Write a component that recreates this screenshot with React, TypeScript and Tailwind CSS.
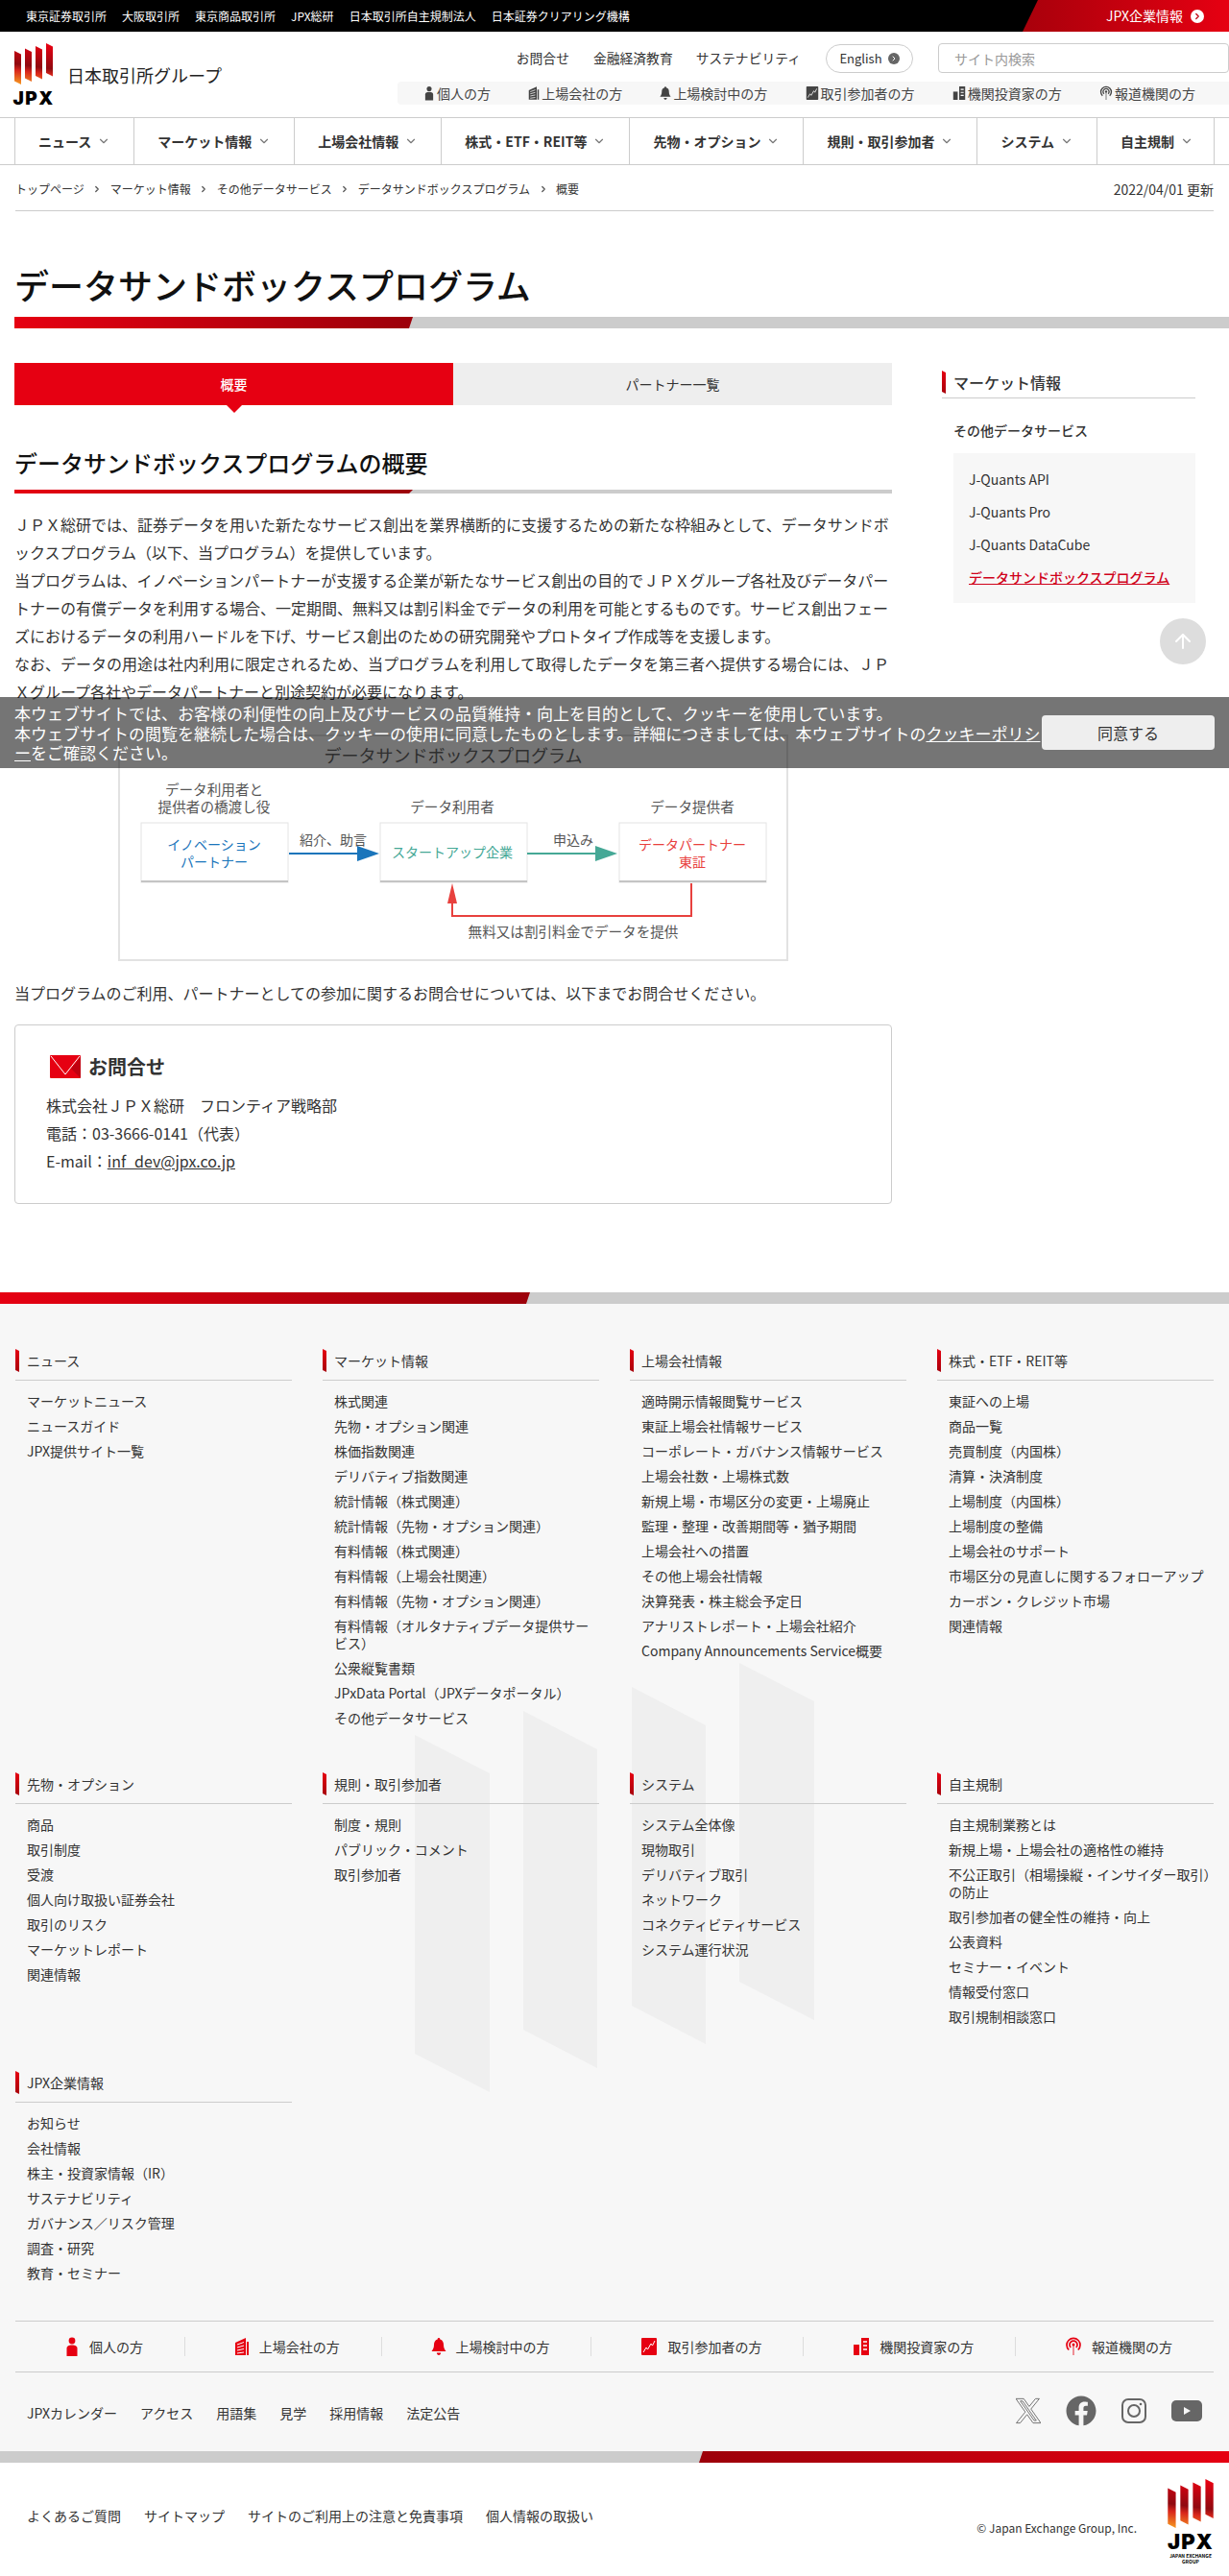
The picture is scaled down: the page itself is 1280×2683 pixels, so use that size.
import { ChevronDown, ChevronRight, ArrowUp } from "lucide-react";
import { FaFacebook } from "react-icons/fa";

type IconKind = "person" | "building" | "bell" | "chart" | "bank" | "antenna";

const topLinks = ["東京証券取引所", "大阪取引所", "東京商品取引所", "JPX総研", "日本取引所自主規制法人", "日本証券クリアリング機構"];
const navItems = ["ニュース", "マーケット情報", "上場会社情報", "株式・ETF・REIT等", "先物・オプション", "規則・取引参加者", "システム", "自主規制"];
const crumbs = ["トップページ", "マーケット情報", "その他データサービス", "データサンドボックスプログラム"];

const audiences: { kind: IconKind; label: string }[] = [
    { kind: "person", label: "個人の方" },
    { kind: "building", label: "上場会社の方" },
    { kind: "bell", label: "上場検討中の方" },
    { kind: "chart", label: "取引参加者の方" },
    { kind: "bank", label: "機関投資家の方" },
    { kind: "antenna", label: "報道機関の方" },
];

const footerSections = [
    { title: "ニュース", links: ["マーケットニュース", "ニュースガイド", "JPX提供サイト一覧"] },
    {
        title: "マーケット情報",
        links: ["株式関連", "先物・オプション関連", "株価指数関連", "デリバティブ指数関連", "統計情報（株式関連）", "統計情報（先物・オプション関連）", "有料情報（株式関連）", "有料情報（上場会社関連）", "有料情報（先物・オプション関連）", "有料情報（オルタナティブデータ提供サービス）", "公衆縦覧書類", "JPxData Portal（JPXデータポータル）", "その他データサービス"],
    },
    {
        title: "上場会社情報",
        links: ["適時開示情報閲覧サービス", "東証上場会社情報サービス", "コーポレート・ガバナンス情報サービス", "上場会社数・上場株式数", "新規上場・市場区分の変更・上場廃止", "監理・整理・改善期間等・猶予期間", "上場会社への措置", "その他上場会社情報", "決算発表・株主総会予定日", "アナリストレポート・上場会社紹介", "Company Announcements Service概要"],
    },
    {
        title: "株式・ETF・REIT等",
        links: ["東証への上場", "商品一覧", "売買制度（内国株）", "清算・決済制度", "上場制度（内国株）", "上場制度の整備", "上場会社のサポート", "市場区分の見直しに関するフォローアップ", "カーボン・クレジット市場", "関連情報"],
    },
    { title: "先物・オプション", links: ["商品", "取引制度", "受渡", "個人向け取扱い証券会社", "取引のリスク", "マーケットレポート", "関連情報"] },
    { title: "規則・取引参加者", links: ["制度・規則", "パブリック・コメント", "取引参加者"] },
    { title: "システム", links: ["システム全体像", "現物取引", "デリバティブ取引", "ネットワーク", "コネクティビティサービス", "システム運行状況"] },
    {
        title: "自主規制",
        links: ["自主規制業務とは", "新規上場・上場会社の適格性の維持", "不公正取引（相場操縦・インサイダー取引）の防止", "取引参加者の健全性の維持・向上", "公表資料", "セミナー・イベント", "情報受付窓口", "取引規制相談窓口"],
    },
    { title: "JPX企業情報", links: ["お知らせ", "会社情報", "株主・投資家情報（IR）", "サステナビリティ", "ガバナンス／リスク管理", "調査・研究", "教育・セミナー"] },
];

const AudienceIcon = ({ kind, color, size = 16 }: { kind: IconKind; color: string; size?: number }) => {
    if (kind === "person") {
        return (
            <svg width={size} height={size + 4} viewBox="0 0 16 20" fill={color}>
                <circle cx="8" cy="4" r="3.4" />
                <path d="M2.5 20v-8c0-2.2 1.6-3.6 5.5-3.6s5.500 1.400 5.500 3.600v8z" />
            </svg>
        );
    }
    if (kind === "building") {
        return (
            <svg width={size} height={size + 4} viewBox="0 0 16 20" fill={color}>
                <path d="M1 6 12 1v18H1z" />
                <path d="M13 5h2v14h-2z" />
                <path d="M3 8l7-2.500M3 11l7-2M3 14l7-1.500M3 17l7-1" stroke="#fff" strokeWidth="1" fill="none" />
            </svg>
        );
    }
    if (kind === "bell") {
        return (
            <svg width={size} height={size + 4} viewBox="0 0 16 20" fill={color}>
                <path d="M8 1c.8 0 1.300.6 1.300 1.400C12 3.200 13 5.500 13 8c0 3.500 1 5 2.500 7h-15C2 13 3 11.500 3 8c0-2.500 1-4.800 3.700-5.600C6.700 1.600 7.200 1 8 1z" />
                <path d="M5.800 16.500h4.400C10 18 9.200 19 8 19s-2-1-2.200-2.500z" />
            </svg>
        );
    }
    if (kind === "chart") {
        return (
            <svg width={size + 2} height={size + 4} viewBox="0 0 18 20">
                <rect x="1" y="1" width="16" height="18" rx="1" fill={color} />
                <path d="M3 16l3-5 1.500 2L11 7l1.500 2L15 4" stroke="#fff" strokeWidth="1" fill="none" />
            </svg>
        );
    }
    if (kind === "bank") {
        return (
            <svg width={size + 2} height={size + 4} viewBox="0 0 18 20" fill={color}>
                <rect x="1" y="8" width="6" height="11" />
                <rect x="9" y="1" width="8" height="18" />
                <path d="M11 5h4M11 9h4M11 13h4" stroke="#fff" strokeWidth="1.500" />
            </svg>
        );
    }
    return (
        <svg width={size + 2} height={size + 4} viewBox="0 0 18 20" fill="none" stroke={color} strokeWidth="1.700">
            <path d="M4.200 13.500a7 7 0 1 1 9.600 0" />
            <path d="M6.200 11a4 4 0 1 1 5.600 0" />
            <circle cx="9" cy="8" r="1.500" fill={color} stroke="none" />
            <path d="M9 9v10" strokeOpacity="0.500" />
        </svg>
    );
};

const LogoBars = ({ id, w, h }: { id: string; w: number; h: number }) => (
    <svg width={w} height={h} viewBox="0 0 40 43">
        <defs>
            <linearGradient id={id} gradientUnits="userSpaceOnUse" x1="20" y1="0" x2="14" y2="43">
                <stop offset="0" stopColor="#e60012" />
                <stop offset="0.55" stopColor="#8f0a10" />
                <stop offset="0.7" stopColor="#d9261c" />
                <stop offset="1" stopColor="#f39021" />
            </linearGradient>
        </defs>
        <path d="M0 8l7 3.500V43l-7-3.500zM11 5.500l7 3.500v31l-7-3.500zM22 3l7 3.500v31l-7-3.500zM33 0l7 3.500v31l-7-3.500z" fill={`url(#${id})`} />
    </svg>
);

const SlantBar = ({ redWidth, height }: { redWidth: string; height: string }) => (
    <div className={`${height} bg-[#cccccc]`}>
        <div className={`${redWidth} h-full bg-gradient-to-r from-[#e60012] to-[#9c000a] [clip-path:polygon(0_0,100%_0,calc(100%-4px)_100%,0_100%)]`} />
    </div>
);

const RedMark = () => <span className="block w-1 h-6 bg-gradient-to-b from-[#e60012] to-[#a8000b] [clip-path:polygon(0_0,100%_2px,100%_100%,0_calc(100%-2px))]" />;

const Diagram = () => (
    <svg width="698" height="236" viewBox="123 765 698 236" className="block mx-auto" fontSize="14.6" fill="#555">
        <rect x="124" y="766" width="696" height="234" fill="#fff" stroke="#e2e2e2" strokeWidth="2" />
        <text x="472" y="794" textAnchor="middle" fontSize="18" fill="#666">データサンドボックスプログラム</text>
        <text x="223" y="828" textAnchor="middle">データ利用者と</text>
        <text x="223" y="846" textAnchor="middle">提供者の橋渡し役</text>
        <text x="471" y="846" textAnchor="middle">データ利用者</text>
        <text x="721" y="846" textAnchor="middle">データ提供者</text>
        {[147, 396, 645].map((x) => (
            <g key={x}>
                <rect x={x} y="857" width="153" height="62" fill="#fff" stroke="#e4e4e4" />
                <rect x={x} y="917" width="153" height="2" fill="#c4c4c4" />
            </g>
        ))}
        <text x="223" y="885" textAnchor="middle" fontSize="14" fill="#1a75bb">イノベーション</text>
        <text x="223" y="903" textAnchor="middle" fontSize="14" fill="#1a75bb">パートナー</text>
        <text x="471" y="893" textAnchor="middle" fontSize="14" fill="#45a896">スタートアップ企業</text>
        <text x="721" y="885" textAnchor="middle" fontSize="14" fill="#e8413e">データパートナー</text>
        <text x="721" y="903" textAnchor="middle" fontSize="14" fill="#e8413e">東証</text>
        <text x="347" y="880" textAnchor="middle" fontSize="14">紹介、助言</text>
        <text x="597" y="880" textAnchor="middle" fontSize="14">申込み</text>
        <path d="M301 889h72" stroke="#1a75bb" strokeWidth="2" />
        <path d="M372 881l23 8-23 8z" fill="#1a75bb" />
        <path d="M549 889h72" stroke="#45a896" strokeWidth="2" />
        <path d="M620 881l23 8-23 8z" fill="#45a896" />
        <path d="M720 920v34H471v-20" stroke="#e8413e" strokeWidth="2" fill="none" />
        <path d="M466 941l5-21 5 21z" fill="#e8413e" />
        <text x="597" y="976" textAnchor="middle">無料又は割引料金でデータを提供</text>
    </svg>
);

const App = () => {
    return (
        <div className="relative w-[1280px] bg-white text-[#333] font-['Noto_Sans_CJK_JP','Noto_Sans',sans-serif]">
            {/* top bar */}
            <div className="flex justify-between h-[33px] bg-black text-white text-xs">
                <div className="flex items-center gap-[16px] pl-[27px]">
                    {topLinks.map((t) => (
                        <span key={t}>{t}</span>
                    ))}
                </div>
                <div className="flex items-center justify-end w-[215px] pr-[26px] gap-[8px] text-[14px] bg-gradient-to-r from-[#a8000b] to-[#e60012] [clip-path:polygon(16px_0,100%_0,100%_100%,0_100%)]">
                    <span>JPX企業情報</span>
                    <span className="flex items-center justify-center w-[14px] h-[14px] rounded-full bg-white">
                        <ChevronRight size={10} strokeWidth={3} className="text-[#c00010]" />
                    </span>
                </div>
            </div>

            {/* header */}
            <div className="flex justify-between h-[89px] pl-[15px]">
                <div className="flex items-start">
                    <div className="flex flex-col items-center w-[40px] pt-3">
                        <LogoBars id="logoTop" w={40} h={43} />
                        <span className="mt-[5px] text-[19px] leading-[20px] font-black tracking-[1.500px] text-black font-['Inter',sans-serif]">JPX</span>
                    </div>
                    <span className="ml-[15px] mt-[33px] text-[18px] leading-6 text-[#222]">日本取引所グループ</span>
                </div>
                <div className="flex flex-col items-end w-[866px] pt-3">
                    <div className="flex items-center h-[31px]">
                        <span className="text-[13.8px]">お問合せ</span>
                        <span className="text-[13.8px] ml-[25px]">金融経済教育</span>
                        <span className="text-[13.8px] ml-[24px]">サステナビリティ</span>
                        <span className="flex items-center justify-center gap-[6px] w-[91px] h-[30px] ml-[26px] border border-[#ccc] rounded-[15px] text-[13px]">
                            English
                            <span className="flex items-center justify-center w-3 h-3 rounded-full bg-[#666]">
                                <ChevronRight size={8} strokeWidth={3} className="text-white" />
                            </span>
                        </span>
                        <span className="flex items-center w-[303px] h-[31px] ml-[26px] pl-4 border border-[#ccc] rounded-[4px] text-sm text-[#999]">サイト内検索</span>
                    </div>
                    <div className="flex items-center justify-between w-[866px] h-6 mt-[9px] pl-[27px] pr-[35px] bg-[#f7f7f7] rounded-l-[4px] text-sm text-[#444]">
                        {audiences.map((a) => (
                            <span key={a.label} className="flex items-center gap-[2px]">
                                <AudienceIcon kind={a.kind} color="#444" size={12} />
                                {a.label}
                            </span>
                        ))}
                    </div>
                </div>
            </div>

            {/* global nav */}
            <div className="h-[50px] px-[15px] border-y border-[#ccc]">
                <div className="flex h-full border-r border-[#ccc]">
                    {navItems.map((n) => (
                        <div key={n} className="flex flex-auto items-center justify-center gap-[6px] px-6 border-l border-[#ccc] text-sm font-bold whitespace-nowrap">
                            {n}
                            <ChevronDown size={14} className="text-[#777]" />
                        </div>
                    ))}
                </div>
            </div>

            {/* breadcrumb */}
            <div className="flex items-center justify-between h-[48px] mx-4 pt-[3px] border-b border-[#ccc]">
                <div className="flex items-center text-xs">
                    {crumbs.map((c) => (
                        <span key={c} className="flex items-center">
                            {c}
                            <ChevronRight size={10} strokeWidth={3} className="mx-[8.5px] text-[#555]" />
                        </span>
                    ))}
                    <span>概要</span>
                </div>
                <span className="text-sm">2022/04/01 更新</span>
            </div>

            {/* page title */}
            <h1 className="pl-[15px] pt-[49px] text-[36px] leading-[54px] text-[#111] font-medium">データサンドボックスプログラム</h1>
            <div className="pl-[15px] mt-[7px]">
                <SlantBar redWidth="w-[415px]" height="h-3" />
            </div>

            <div className="flex justify-between pl-[15px] pr-[35px] pt-9">
                <main className="w-[914px]">
                    <div className="flex h-[44px] text-sm">
                        <div className="relative flex items-center justify-center w-1/2 bg-[#e60012] text-white font-medium">
                            概要
                            <span className="absolute top-full left-1/2 -ml-2 w-0 h-0 border-x-8 border-t-8 border-x-transparent border-t-[#e60012]" />
                        </div>
                        <div className="flex items-center justify-center w-1/2 bg-[#eeeeee]">パートナー一覧</div>
                    </div>

                    <h2 className="mt-[42px] text-2xl leading-9 text-[#111] font-medium">データサンドボックスプログラムの概要</h2>
                    <div className="mt-[10px] mb-[18px]">
                        <SlantBar redWidth="w-[415px]" height="h-1" />
                    </div>

                    <p className="text-base leading-[29px]">
                        ＪＰＸ総研では、証券データを用いた新たなサービス創出を業界横断的に支援するための新たな枠組みとして、データサンドボックスプログラム（以下、当プログラム）を提供しています。
                        <br />
                        当プログラムは、イノベーションパートナーが支援する企業が新たなサービス創出の目的でＪＰＸグループ各社及びデータパートナーの有償データを利用する場合、一定期間、無料又は割引料金でデータの利用を可能とするものです。サービス創出フェーズにおけるデータの利用ハードルを下げ、サービス創出のための研究開発やプロトタイプ作成等を支援します。
                        <br />
                        なお、データの用途は社内利用に限定されるため、当プログラムを利用して取得したデータを第三者へ提供する場合には、ＪＰＸグループ各社やデータパートナーと別途契約が必要になります。
                    </p>

                    <div className="mt-[30px]">
                        <Diagram />
                    </div>

                    <p className="mt-[19px] text-base leading-[29px]">当プログラムのご利用、パートナーとしての参加に関するお問合せについては、以下までお問合せください。</p>

                    <div className="mt-[18px] h-[187px] pt-[31px] pl-[32px] border border-[#ccc] rounded-[4px]">
                        <div className="flex items-center gap-2 h-6 ml-[4px]">
                            <svg width="32" height="24" viewBox="0 0 32 24">
                                <rect width="32" height="24" rx="1" fill="#e60012" />
                                <path d="M32 2 22 14 32 24z" fill="#c00010" />
                                <path d="M1 1 16 20 31 1" stroke="#fff" strokeWidth="1" fill="none" />
                            </svg>
                            <span className="text-xl font-bold">お問合せ</span>
                        </div>
                        <div className="mt-[14px] text-base leading-[29px]">
                            <p>株式会社ＪＰＸ総研　フロンティア戦略部</p>
                            <p>電話：03-3666-0141（代表）</p>
                            <p>
                                E-mail：<span className="underline">inf_dev@jpx.co.jp</span>
                            </p>
                        </div>
                    </div>
                </main>

                <aside className="w-[264px]">
                    <div className="flex items-center gap-2 pt-[8px] pb-[4px] border-b border-[#ccc]">
                        <RedMark />
                        <span className="text-base leading-6 font-medium">マーケット情報</span>
                    </div>
                    <p className="pl-3 mt-[23px] text-sm leading-5 font-medium">その他データサービス</p>
                    <div className="flex flex-col gap-[14px] ml-3 mt-[14px] py-[17px] pl-4 bg-[#f7f7f7] text-sm leading-5">
                        <span>J-Quants API</span>
                        <span>J-Quants Pro</span>
                        <span>J-Quants DataCube</span>
                        <span className="text-[#d0021b] underline font-medium">データサンドボックスプログラム</span>
                    </div>
                </aside>
            </div>

            {/* footer */}
            <div className="mt-[92px]">
                <SlantBar redWidth="w-[552px]" height="h-3" />
            </div>
            <footer className="relative h-[1195px] bg-[#f7f7f7] pt-[47px]">
                {/* watermark logo */}
                <svg className="absolute left-0 top-0" width="1280" height="1195" viewBox="0 1358 1280 1195" fill="#efefef">
                    <path d="M432 1807l78 40v332l-78-40zM545 1782l77 40v332l-77-40zM658 1757l77 40v332l-77-40zM770 1732l78 40v332l-78-40z" />
                </svg>
                <div className="relative">
                    <div className="grid grid-cols-4 gap-x-8 gap-y-12 px-4">
                        {footerSections.map((s) => (
                            <div key={s.title}>
                                <div className="flex items-center gap-2 h-[33px] pb-2 border-b border-[#ccc]">
                                    <RedMark />
                                    <span className="text-sm">{s.title}</span>
                                </div>
                                <ul className="flex flex-col gap-2 mt-[12px] pl-3 text-sm leading-[18px]">
                                    {s.links.map((l) => (
                                        <li key={l}>{l}</li>
                                    ))}
                                </ul>
                            </div>
                        ))}
                    </div>

                    <div className="flex items-center h-[54px] mx-4 mt-[41px] border-y border-[#ccc]">
                        {audiences.map((a, i) => (
                            <div key={a.label} className={`flex flex-auto items-center justify-center gap-[10px] h-5 pl-2 text-sm ${i < 5 ? "border-r border-[#ddd]" : ""}`}>
                                <AudienceIcon kind={a.kind} color="#e60012" />
                                {a.label}
                            </div>
                        ))}
                    </div>

                    <div className="flex items-center justify-between h-[84px] px-7">
                        <div className="flex gap-6 text-sm">
                            {["JPXカレンダー", "アクセス", "用語集", "見学", "採用情報", "法定公告"].map((t) => (
                                <span key={t}>{t}</span>
                            ))}
                        </div>
                        <div className="flex items-center gap-[26px] -mt-[4px] text-[#666]">
                            <svg width="26" height="28" viewBox="0 0 24 24" preserveAspectRatio="none" fill="none" stroke="#666" strokeWidth="0.800">
                                <path d="M18.901 1.153h3.680l-8.040 9.190L24 22.846h-7.406l-5.800-7.584-6.638 7.584H.474l8.600-9.830L0 1.154h7.594l5.243 6.932ZM17.610 20.644h2.039L6.486 3.240H4.298Z" />
                            </svg>
                            <FaFacebook size={32} />
                            <svg width="26" height="26" viewBox="0 0 26 26" fill="none" stroke="#666" strokeWidth="2">
                                <rect x="1" y="1" width="24" height="24" rx="6" />
                                <circle cx="13" cy="13" r="6" />
                                <circle cx="20" cy="6" r="1.300" fill="#666" stroke="none" />
                            </svg>
                            <svg width="32" height="22" viewBox="0 0 32 22">
                                <rect width="32" height="22" rx="5" fill="#666" />
                                <path d="M13 7l7 4-7 4z" fill="#f7f7f7" />
                            </svg>
                        </div>
                    </div>
                </div>
            </footer>
            <div className="flex justify-end h-3 bg-[#cccccc]">
                <div className="w-[552px] h-full bg-gradient-to-l from-[#e60012] to-[#9c000a] [clip-path:polygon(4px_0,100%_0,100%_100%,0_100%)]" />
            </div>

            <div className="flex justify-between h-[118px] pl-7 pr-4">
                <div className="flex gap-6 pt-[45px] text-sm leading-5">
                    {["よくあるご質問", "サイトマップ", "サイトのご利用上の注意と免責事項", "個人情報の取扱い"].map((t) => (
                        <span key={t}>{t}</span>
                    ))}
                </div>
                <div className="flex">
                    <span className="mt-[60px] text-xs leading-4">© Japan Exchange Group, Inc.</span>
                    <div className="flex flex-col items-center w-[48px] ml-[32px] pt-[17px]">
                        <LogoBars id="logoBottom" w={48} h={51} />
                        <span className="mt-[3px] text-[22px] leading-[23px] font-black tracking-[1px] text-black font-['Inter',sans-serif]">JPX</span>
                        <span className="text-[5px] leading-[6px] text-center font-bold text-black whitespace-nowrap">JAPAN EXCHANGE<br />GROUP</span>
                    </div>
                </div>
            </div>

            {/* back to top */}
            <div className="absolute left-[1208px] top-[644px] flex items-center justify-center w-12 h-12 rounded-full bg-[#dddddd]">
                <ArrowUp size={24} className="text-white" />
            </div>

            {/* cookie notice */}
            <div className="absolute left-0 top-[726px] flex w-full h-[74px] pl-[15px] bg-[rgba(0,0,0,0.54)] text-white">
                <p className="w-[1070px] pt-[7px] text-[17px] leading-[20.500px]">
                    本ウェブサイトでは、お客様の利便性の向上及びサービスの品質維持・向上を目的として、クッキーを使用しています。
                    <br />
                    本ウェブサイトの閲覧を継続した場合は、クッキーの使用に同意したものとします。詳細につきましては、本ウェブサイトの<span className="underline">クッキーポリシー</span>をご確認ください。
                </p>
                <button className="w-[180px] h-9 mt-[19px] bg-[#eeeeee] rounded-[4px] text-base text-[#333]">同意する</button>
            </div>
        </div>
    );
};

export default App;
